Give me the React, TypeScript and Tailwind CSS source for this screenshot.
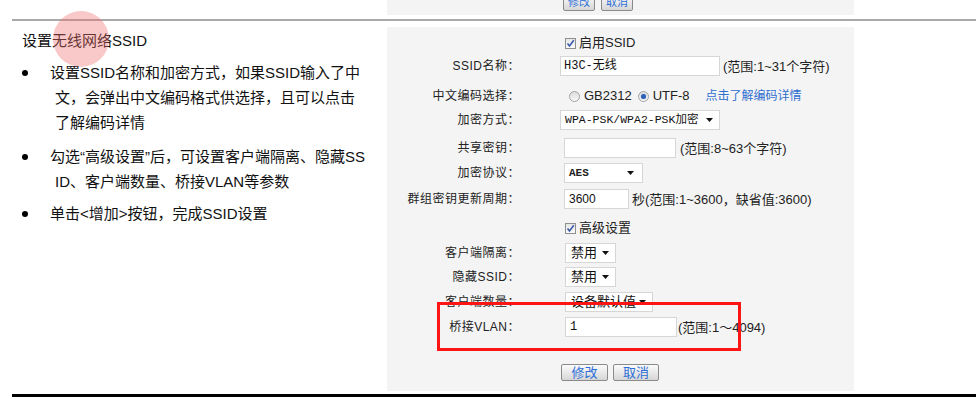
import React from "react";

const sans = "font-['Liberation_Sans','Noto_Sans_CJK_SC',sans-serif]";
const mono = "font-['Liberation_Mono','Noto_Sans_CJK_SC',monospace]";

function Checkbox() {
  return (
    <span className="w-[11px] h-[11px] border border-[#8e8f8f] bg-gradient-to-b from-[#e6e6e6] to-[#fbfbfb] flex items-center justify-center">
      <svg width="9" height="9" viewBox="0 0 9 9">
        <path d="M1.5 4.5 L3.5 7 L7.8 1.3" stroke="#3b5aa8" strokeWidth="1.6" fill="none" />
      </svg>
    </span>
  );
}

function Radio({ checked }: { checked?: boolean }) {
  return (
    <span className="w-[11px] h-[11px] rounded-full border border-[#a3a3a3] bg-gradient-to-b from-[#dcdcdc] to-[#f8f8f8] flex items-center justify-center">
      {checked && (
        <span className="w-[5px] h-[5px] rounded-full bg-[#2f5fb4] shadow-[0_0_1px_#7ea4e0]" />
      )}
    </span>
  );
}

function Arrow() {
  return (
    <svg width="7" height="4" viewBox="0 0 7 4">
      <path d="M0 0 L7 0 L3.5 4 Z" fill="#111" />
    </svg>
  );
}

function Row({
  label,
  mt,
  children,
}: {
  label: string;
  mt: string;
  children?: React.ReactNode;
}) {
  return (
    <div className={`flex items-center h-[24px] ${mt}`}>
      <div className="w-[133px] text-right text-[12px] tracking-[0.5px] text-[#222] whitespace-nowrap">
        {label}
      </div>
      <div className="ml-[40px] flex items-center whitespace-nowrap">
        {children}
      </div>
    </div>
  );
}

function Help({ text }: { text: string }) {
  return <span className="text-[13px] text-[#222]">{text}</span>;
}

function Btn({ text, w }: { text: string; w: string }) {
  return (
    <button
      className={`${w} h-[17px] border border-[#8a8a8a] rounded-[2px] bg-gradient-to-b from-[#fbfbfb] to-[#d6d6d6] text-[13px] leading-none text-[#2d6fd6] flex items-center justify-center`}
    >
      {text}
    </button>
  );
}

export default function App() {
  return (
    <div className={`w-[976px] h-[416px] bg-white relative overflow-hidden ${sans}`}>
      {/* top strip */}
      <div className="flex">
        <div className="w-[387px]" />
        <div className="w-[467px] h-[15px] bg-[#f4f4f4] overflow-hidden flex pl-[176px] gap-[6px]">
          <button className="w-[32px] h-[17px] mt-[-6px] border border-[#8a8a8a] rounded-[2px] bg-gradient-to-b from-[#fbfbfb] to-[#d6d6d6] text-[11px] leading-none text-[#2d6fd6] flex items-end justify-center pb-[2px]">
            修改
          </button>
          <button className="w-[32px] h-[17px] mt-[-6px] border border-[#8a8a8a] rounded-[2px] bg-gradient-to-b from-[#fbfbfb] to-[#d6d6d6] text-[11px] leading-none text-[#2d6fd6] flex items-end justify-center pb-[2px]">
            取消
          </button>
        </div>
      </div>

      <div className="mt-[4px] ml-[12px] h-[2px] bg-[#a9a9a9]" />

      <div className="flex mt-[6px]">
        {/* left description */}
        <div className="w-[387px] text-[15px] text-[#111] whitespace-nowrap">
          <div className="mt-[1px] pl-[22px] leading-[25px]">设置无线网络SSID</div>

          <div className="flex pl-[22px] mt-[7px] leading-[25px]">
            <span className="w-[28px] h-[25px] flex items-center">
              <span className="w-[6px] h-[6px] rounded-full bg-black" />
            </span>
            <div>
              <div>设置SSID名称和加密方式，如果SSID输入了中</div>
              <div className="pl-[5px]">文，会弹出中文编码格式供选择，且可以点击</div>
              <div className="pl-[5px]">了解编码详情</div>
            </div>
          </div>

          <div className="flex pl-[22px] mt-[9px] leading-[25px]">
            <span className="w-[28px] h-[25px] flex items-center">
              <span className="w-[6px] h-[6px] rounded-full bg-black" />
            </span>
            <div>
              <div>勾选“高级设置”后，可设置客户端隔离、隐藏SS</div>
              <div className="pl-[5px]">ID、客户端数量、桥接VLAN等参数</div>
            </div>
          </div>

          <div className="flex pl-[22px] mt-[7px] leading-[25px]">
            <span className="w-[28px] h-[25px] flex items-center">
              <span className="w-[6px] h-[6px] rounded-full bg-black" />
            </span>
            <div>单击&lt;增加&gt;按钮，完成SSID设置</div>
          </div>
        </div>

        {/* settings panel */}
        <div className="w-[467px] h-[364px] bg-[#f4f4f4] pt-[5px]">
          <div className="flex items-center h-[22px]">
            <div className="w-[133px]" />
            <div className="ml-[45px] flex items-center">
              <Checkbox />
              <span className="ml-[3px] text-[13px] text-[#222]">启用SSID</span>
            </div>
          </div>

          <Row label="SSID名称：" mt="mt-0">
            <div className={`w-[160px] h-[20px] border border-[#d6d6d6] bg-white pl-[3px] flex items-center text-[12px] text-[#111] ${mono}`}>
              H3C-无线
            </div>
            <span className="ml-[3px]">
              <Help text="(范围:1~31个字符)" />
            </span>
          </Row>

          <Row label="中文编码选择：" mt="mt-[6px]">
            <span className="ml-[9px]">
              <Radio />
            </span>
            <span className="ml-[4px] text-[13px] text-[#222]">GB2312</span>
            <span className="ml-[6px]">
              <Radio checked />
            </span>
            <span className="ml-[4px] text-[13px] text-[#222]">UTF-8</span>
            <span className="ml-[16px] text-[12px] text-[#2f6fd0]">点击了解编码详情</span>
          </Row>

          <Row label="加密方式：" mt="mt-0">
            <div className="w-[160px] h-[20px] border border-[#d6d6d6] bg-white pl-[4px] pr-[6px] flex items-center justify-between">
              <span className={`text-[11.5px] text-[#111] ${mono}`}>WPA-PSK/WPA2-PSK加密</span>
              <Arrow />
            </div>
          </Row>

          <Row label="共享密钥：" mt="mt-[4px]">
            <div className="ml-[4px] w-[112px] h-[20px] border border-[#d6d6d6] bg-white" />
            <span className="ml-[4px]">
              <Help text="(范围:8~63个字符)" />
            </span>
          </Row>

          <Row label="加密协议：" mt="mt-[1px]">
            <div className="ml-[4px] w-[79px] h-[20px] border border-[#d6d6d6] bg-white pl-[4px] pr-[8px] flex items-center justify-between">
              <span className={`text-[11px] font-bold text-[#222] ${mono}`}>AES</span>
              <Arrow />
            </div>
          </Row>

          <Row label="群组密钥更新周期：" mt="mt-[2px]">
            <div className="ml-[4px] w-[65px] h-[20px] border border-[#d6d6d6] bg-white pl-[4px] flex items-center text-[12px] text-[#111]">
              3600
            </div>
            <span className="ml-[3px]">
              <Help text="秒(范围:1~3600，缺省值:3600)" />
            </span>
          </Row>

          <div className="flex items-center h-[24px] mt-[5px]">
            <div className="w-[133px]" />
            <div className="ml-[45px] flex items-center">
              <Checkbox />
              <span className="ml-[3px] text-[13px] text-[#222]">高级设置</span>
            </div>
          </div>

          <Row label="客户端隔离：" mt="mt-[1px]">
            <div className="ml-[5px] w-[51px] h-[20px] border border-[#d6d6d6] bg-white pl-[5px] pr-[6px] flex items-center justify-between">
              <span className="text-[13px] text-[#111]">禁用</span>
              <Arrow />
            </div>
          </Row>

          <Row label="隐藏SSID：" mt="mt-0">
            <div className="ml-[5px] w-[51px] h-[20px] border border-[#d6d6d6] bg-white pl-[5px] pr-[6px] flex items-center justify-between">
              <span className="text-[13px] text-[#111]">禁用</span>
              <Arrow />
            </div>
          </Row>

          <Row label="客户端数量：" mt="mt-[1px]">
            <div className="ml-[5px] w-[88px] h-[20px] border border-[#d6d6d6] bg-white pl-[5px] pr-[6px] flex items-center justify-between">
              <span className="text-[13px] text-[#111]">设备默认值</span>
              <Arrow />
            </div>
          </Row>

          <Row label="桥接VLAN：" mt="mt-[1px]">
            <div className={`ml-[5px] w-[112px] h-[20px] border border-[#d6d6d6] bg-white pl-[4px] flex items-center text-[12px] text-[#111] ${mono}`}>
              1
            </div>
            <span className="ml-[1px]">
              <Help text="(范围:1～4094)" />
            </span>
          </Row>

          <div className="flex items-center h-[17px] mt-[25px]">
            <div className="w-[133px]" />
            <div className="ml-[41px] flex items-center gap-[5px]">
              <Btn text="修改" w="w-[47px]" />
              <Btn text="取消" w="w-[46px]" />
            </div>
          </div>
        </div>
      </div>

      <div className="mt-[3px] ml-[12px] h-[3px] bg-black" />

      {/* highlight overlays */}
      <div className="absolute left-[53px] top-[11px] w-[56px] h-[56px] rounded-full bg-[rgba(240,110,110,0.38)]" />
      <div className="absolute left-[437px] top-[302px] w-[304px] h-[49px] border-[3px] border-[#ff1414]" />
    </div>
  );
}
